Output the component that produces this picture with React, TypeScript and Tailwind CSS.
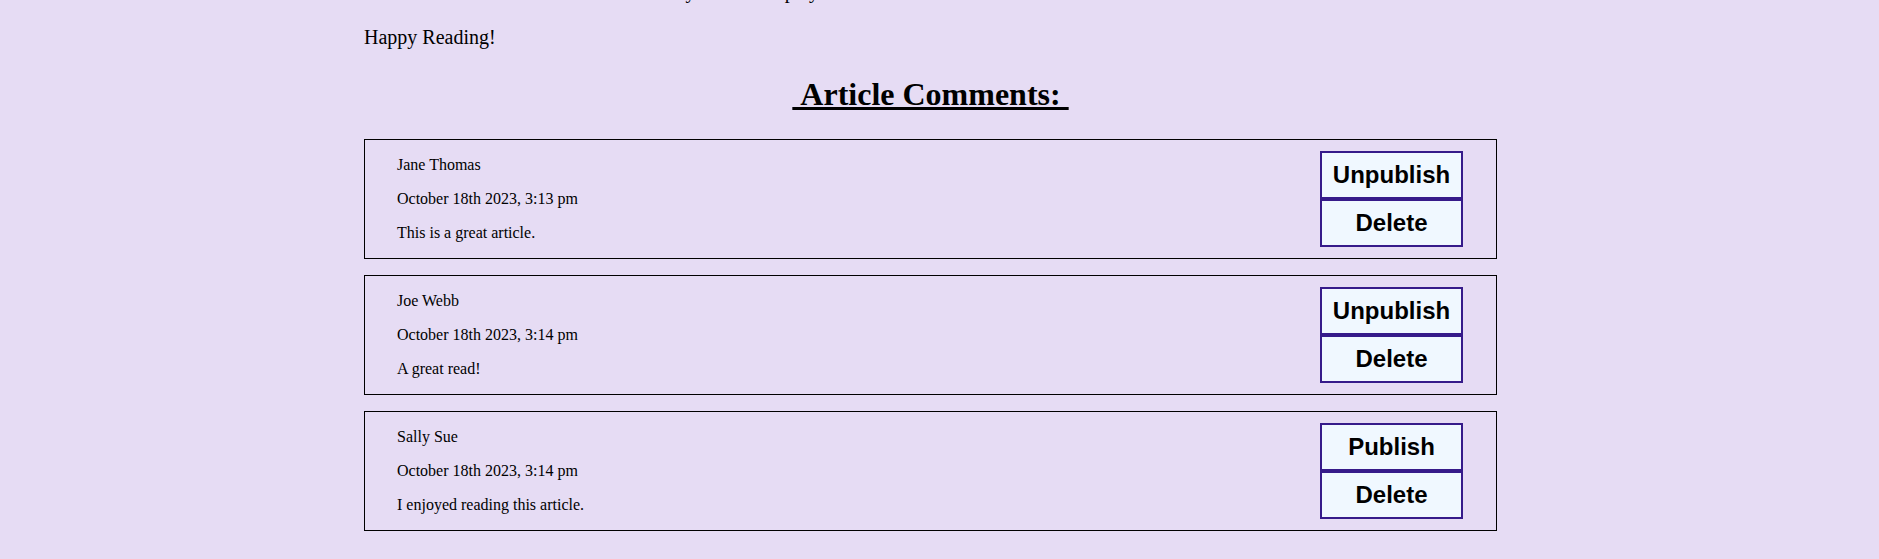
const comments = [
  { name: "Jane Thomas", date: "October 18th 2023, 3:13 pm", text: "This is a great article.", published: true },
  { name: "Joe Webb", date: "October 18th 2023, 3:14 pm", text: "A great read!", published: true },
  { name: "Sally Sue", date: "October 18th 2023, 3:14 pm", text: "I enjoyed reading this article.", published: false },
];

export default function App() {
  return (
    <div className="flex min-h-[559px] w-full flex-col overflow-hidden bg-[#e6dcf4] font-['Liberation_Serif','Times_New_Roman',serif] text-black">
      <div className="ml-[364px] flex w-[1133px] flex-col">
        <p className="mt-[-20px] text-[20px] leading-[23px]">
          All of these short articles were written by staff to display their ideas.
        </p>
        <p className="mt-[23px] text-[20px] leading-[23px]">Happy Reading!</p>
        <h1 className="mt-[27px] text-center text-[32px] font-bold leading-[36px]">
          <u className="underline decoration-[length:3px] underline-offset-[2px]">{"\u00a0Article Comments:\u00a0"}</u>
        </h1>
        <div className="mt-[27px] flex flex-col gap-4">
          {comments.map((c) => (
            <div
              key={c.name}
              className="flex items-center justify-between border border-black pl-8 pr-[33px]"
            >
              <div className="flex flex-col gap-4 py-4 text-[16px] leading-[18px]">
                <p>{c.name}</p>
                <p>{c.date}</p>
                <p>{c.text}</p>
              </div>
              <div className="flex flex-col font-['Liberation_Sans',Arial,sans-serif] text-[24px] font-bold leading-none">
                <button className="flex h-12 w-[143px] items-center justify-center border-2 border-[#361b8a] bg-[#f0f8ff] text-black">
                  {c.published ? "Unpublish" : "Publish"}
                </button>
                <button className="flex h-12 w-[143px] items-center justify-center border-2 border-[#361b8a] bg-[#f0f8ff] text-black">
                  Delete
                </button>
              </div>
            </div>
          ))}
        </div>
      </div>
    </div>
  );
}
